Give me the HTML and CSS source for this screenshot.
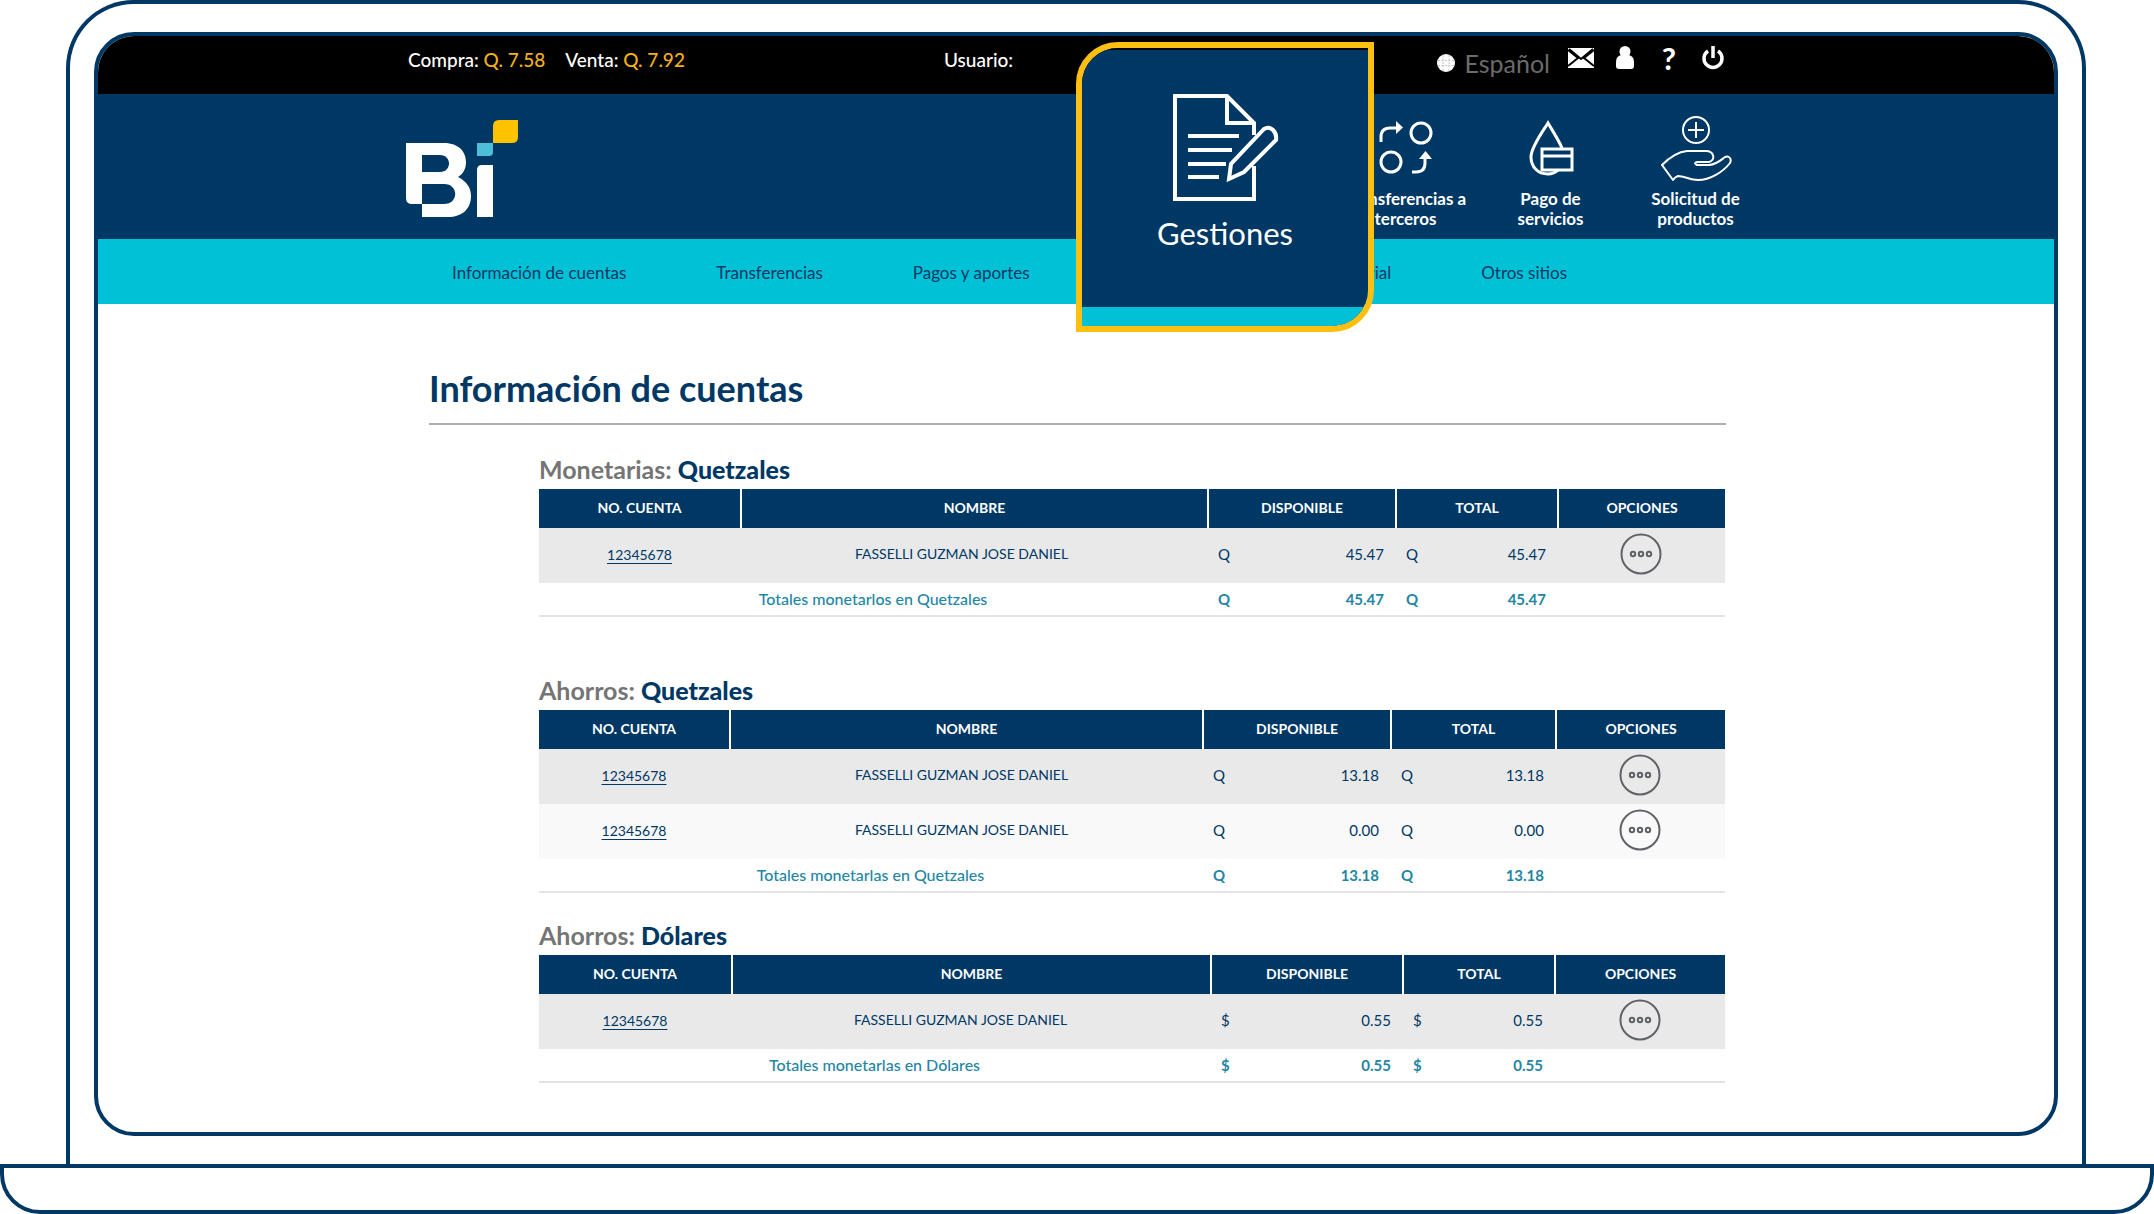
FILE: index.html
```html
<!DOCTYPE html>
<html lang="es">
<head>
<meta charset="utf-8">
<meta name="viewport" content="width=device-width, initial-scale=1">
<title>Información de cuentas</title>
<link rel="stylesheet" href="styles.css">
</head>
<body>
<svg class="sprite" aria-hidden="true">
  <symbol id="dots" viewBox="0 0 42 42">
    <g fill="none" stroke="#5f6266" stroke-width="2">
      <circle cx="21" cy="21" r="19.5"/>
      <circle cx="13" cy="21" r="2.2"/><circle cx="21" cy="21" r="2.2"/><circle cx="29" cy="21" r="2.2"/>
    </g>
  </symbol>
</svg>
<div class="laptop">
  <div class="lid">
    <div class="screen">
      <header class="site-header">
        <div class="topbar">
          <div class="container topbar-row">
            <div class="rates">
              <span>Compra: <b>Q. 7.58</b></span>
              <span>Venta: <b>Q. 7.92</b></span>
            </div>
            <div class="user">Usuario:</div>
            <div class="tools">
              <button type="button" class="language">
                <svg width="20" height="18" viewBox="0 0 20 18" aria-hidden="true"><circle cx="10" cy="9" r="9" fill="#fff"/><path d="M2 6.5h16M2 11.5h16M7 1v16M13 1v16" stroke="#c4c4c4" stroke-dasharray="2 1.5"/></svg>
                Español
              </button>
              <button type="button" class="tool" aria-label="Mensajes">
                <svg width="26" height="20" viewBox="0 0 26 20"><path fill="#fff" d="M0 0H26V20H0Z"/><path d="M0 2l10 8L0 18M26 2l-10 8 10 8M1 1l12 10L25 1" fill="none" stroke="#000" stroke-width="2"/></svg>
              </button>
              <button type="button" class="tool" aria-label="Perfil">
                <svg width="26" height="24" viewBox="0 0 26 24"><circle cx="13" cy="5.500" r="5.500" fill="#fff"/><path fill="#fff" d="M10 9C5 9.500 4 13 4 17v3q0 3 3 3h12q3 0 3-3v-3c0-4-1-7.500-6-8z"/></svg>
              </button>
              <button type="button" class="tool help" aria-label="Ayuda">?</button>
              <button type="button" class="tool" aria-label="Salir">
                <svg width="26" height="24" viewBox="0 0 26 24"><path d="M8 5a9 9 0 1 0 10 0M13 0v12" fill="none" stroke="#fff" stroke-width="3.500"/></svg>
              </button>
            </div>
          </div>
        </div>

        <div class="brandbar">
          <div class="container brand-row">
            <a href="#" class="logo" aria-label="Bi">
              <svg width="113" height="97" viewBox="0 0 113 97">
                <path fill="#fff" fill-rule="evenodd" d="M0 23H38C53 23 60 32 60 42C60 49 57 54 52 57C60 61 65 67 65 76C65 89 56 97 42 97H16V84H6Q0 84 0 78ZM16 35V52H34C46 52 46 35 34 35ZM16 64V84H38C53 84 53 64 38 64Z"/>
                <path fill="#fff" d="M71 97V50q0-5 5-5h11v52z"/>
                <path fill="#4dbfd6" d="M71 23h16v9q0 4-4 4H71z"/>
                <path fill="#fdc300" d="M87 23V6q0-6 6-6h19v17q0 6-6 6z"/>
              </svg>
            </a>
            <nav class="quick" aria-label="Accesos rápidos">
              <a href="#">
                <svg width="56" height="68" viewBox="0 0 56 68" fill="none" stroke="#fff" stroke-width="3"><circle cx="43" cy="18" r="10"/><circle cx="13" cy="47" r="10"/><path d="M3 27v-5q0-9 9-9h10M34 57h4q9 0 9-9V42"/><path fill="#fff" stroke="none" d="M18 6l7 6.500-7 6.500zM41 44l6.500-8 6.500 8z"/></svg>
                <span>Transferencias a<br>terceros</span>
              </a>
              <a href="#">
                <svg width="46" height="68" viewBox="0 0 46 68" fill="none" stroke="#fff" stroke-width="3"><path d="M34 33C30 24 24 15 20 8C15 16 3 32 3 42c0 10 7 17 17 17q6 0 10-4"/><path d="M14 34h30v21H14zM14 41h30"/></svg>
                <span>Pago de<br>servicios</span>
              </a>
              <a href="#">
                <svg width="72" height="68" viewBox="0 0 72 68" fill="none" stroke="#fff" stroke-width="2" stroke-linejoin="round"><circle cx="36" cy="15" r="13"/><path d="M36 7v16M28 15h16"/><path d="M13 65L2 50C8 44 17 37 27 36h19c8 0 10 9 3 11H37q-4 1 0 3h12C58 49 62 44 65 42c4-2 7 2 5 6C63 57 50 65 38 65c-8 0-14-4-20-4q-3 1-5 4z"/></svg>
                <span>Solicitud de<br>productos</span>
              </a>
            </nav>
          </div>
        </div>

        <nav class="menubar" aria-label="Principal">
          <div class="container menu-row">
            <div class="menu-group">
              <a href="#">Información de cuentas</a>
              <a href="#">Transferencias</a>
              <a href="#">Pagos y aportes</a>
            </div>
            <div class="menu-group">
              <a href="#">Empresarial</a>
              <a href="#">Otros sitios</a>
            </div>
          </div>
        </nav>

        <div class="callout">
          <a href="#" class="callout-link">
            <svg width="110" height="110" viewBox="0 0 110 110" fill="none" stroke="#fff" stroke-width="4"><path d="M84 73V106H5V3H57L84 30V42"/><path d="M57 3V30H84"/><path d="M18 43H69M18 57H62M18 71H56M18 84H49"/><path d="M59 86L61 71 94 36q5-3 9 1t3 10L74 79z"/></svg>
            <span>Gestiones</span>
          </a>
        </div>
      </header>

      <main class="content">
        <h1>Información de cuentas</h1>

        <section class="accounts">
          <h2>Monetarias: <b>Quetzales</b></h2>
          <table class="grid-a">
            <colgroup><col class="c1"><col class="c2"><col class="c3"><col class="c4"><col class="c5"></colgroup>
            <thead><tr><th>NO. CUENTA</th><th>NOMBRE</th><th>DISPONIBLE</th><th>TOTAL</th><th>OPCIONES</th></tr></thead>
            <tbody>
              <tr>
                <td><a href="#">12345678</a></td><td class="name">FASSELLI GUZMAN JOSE DANIEL</td>
                <td><div class="amount"><span>Q</span><span>45.47</span></div></td>
                <td><div class="amount"><span>Q</span><span>45.47</span></div></td>
                <td><button type="button" class="more" aria-label="Opciones"><svg width="42" height="42"><use href="#dots"/></svg></button></td>
              </tr>
            </tbody>
            <tfoot><tr>
              <td colspan="2" class="total-label">Totales monetarlos en Quetzales</td>
              <td><div class="amount"><span>Q</span><span>45.47</span></div></td>
              <td><div class="amount"><span>Q</span><span>45.47</span></div></td>
              <td></td>
            </tr></tfoot>
          </table>
        </section>

        <section class="accounts spaced">
          <h2>Ahorros: <b>Quetzales</b></h2>
          <table class="grid-b">
            <colgroup><col class="c1"><col class="c2"><col class="c3"><col class="c4"><col class="c5"></colgroup>
            <thead><tr><th>NO. CUENTA</th><th>NOMBRE</th><th>DISPONIBLE</th><th>TOTAL</th><th>OPCIONES</th></tr></thead>
            <tbody>
              <tr>
                <td><a href="#">12345678</a></td><td class="name">FASSELLI GUZMAN JOSE DANIEL</td>
                <td><div class="amount"><span>Q</span><span>13.18</span></div></td>
                <td><div class="amount"><span>Q</span><span>13.18</span></div></td>
                <td><button type="button" class="more" aria-label="Opciones"><svg width="42" height="42"><use href="#dots"/></svg></button></td>
              </tr>
              <tr>
                <td><a href="#">12345678</a></td><td class="name">FASSELLI GUZMAN JOSE DANIEL</td>
                <td><div class="amount"><span>Q</span><span>0.00</span></div></td>
                <td><div class="amount"><span>Q</span><span>0.00</span></div></td>
                <td><button type="button" class="more" aria-label="Opciones"><svg width="42" height="42"><use href="#dots"/></svg></button></td>
              </tr>
            </tbody>
            <tfoot><tr>
              <td colspan="2" class="total-label">Totales monetarlas en Quetzales</td>
              <td><div class="amount"><span>Q</span><span>13.18</span></div></td>
              <td><div class="amount"><span>Q</span><span>13.18</span></div></td>
              <td></td>
            </tr></tfoot>
          </table>
        </section>

        <section class="accounts">
          <h2>Ahorros: <b>Dólares</b></h2>
          <table class="grid-c">
            <colgroup><col class="c1"><col class="c2"><col class="c3"><col class="c4"><col class="c5"></colgroup>
            <thead><tr><th>NO. CUENTA</th><th>NOMBRE</th><th>DISPONIBLE</th><th>TOTAL</th><th>OPCIONES</th></tr></thead>
            <tbody>
              <tr>
                <td><a href="#">12345678</a></td><td class="name">FASSELLI GUZMAN JOSE DANIEL</td>
                <td><div class="amount"><span>$</span><span>0.55</span></div></td>
                <td><div class="amount"><span>$</span><span>0.55</span></div></td>
                <td><button type="button" class="more" aria-label="Opciones"><svg width="42" height="42"><use href="#dots"/></svg></button></td>
              </tr>
            </tbody>
            <tfoot><tr>
              <td colspan="2" class="total-label">Totales monetarlas en Dólares</td>
              <td><div class="amount"><span>$</span><span>0.55</span></div></td>
              <td><div class="amount"><span>$</span><span>0.55</span></div></td>
              <td></td>
            </tr></tfoot>
          </table>
        </section>
      </main>
    </div>
  </div>
  <div class="base"></div>
</div>
</body>
</html>
```
FILE: styles.css
```css
:root {
  --navy: #003865;
  --cyan: #00c1d5;
  --gold: #fdc010;
}

* { box-sizing: border-box; }

body {
  margin: 0;
  background: #fff;
  color: var(--navy);
  font-family: Lato, "Open Sans", sans-serif;
}

a { color: inherit; text-decoration: none; }

button {
  padding: 0;
  border: 0;
  background: none;
  color: inherit;
  font: inherit;
  cursor: pointer;
}

svg { display: block; }

.sprite { display: none; }

/* Laptop frame */
.lid {
  margin: 0 68px 0 66px;
  padding: 28px 24px;
  border: 4px solid var(--navy);
  border-bottom: 0;
  border-radius: 68px 68px 0 0;
}

.screen {
  overflow: hidden;
  border: 4px solid var(--navy);
  border-radius: 40px;
}

.base {
  height: 50px;
  border: 4px solid var(--navy);
  border-radius: 0 0 40px 40px;
}

/* Header */
.site-header { position: relative; }

.container {
  max-width: 1340px;
  margin: 0 auto;
}

.topbar {
  background: #000;
  color: #fff;
  font-size: 19px;
  font-weight: 500;
  line-height: 24px;
}

.topbar-row {
  display: grid;
  grid-template-columns: 40% 1fr auto;
  height: 58px;
  padding: 8px 20px 0 0;
}

.rates {
  display: flex;
  gap: 20px;
  padding: 4px 0 0 2px;
}

.rates b {
  color: #f5b11a;
  font-weight: 500;
}

.user { padding: 4px 0 0 10px; }

.tools {
  display: flex;
  align-items: flex-start;
  gap: 18px;
}

.tool {
  display: flex;
  align-items: center;
  justify-content: center;
  width: 26px;
  height: 28px;
}

.help {
  font-size: 31px;
  font-weight: 700;
}

.language {
  display: flex;
  align-items: center;
  gap: 8px;
  height: 38px;
  color: #6b6b6b;
  font-size: 25px;
  font-weight: 400;
}

.brandbar { background: var(--navy); }

.brand-row {
  display: flex;
  justify-content: space-between;
  height: 145px;
}

.logo { padding-top: 26px; }

.quick {
  display: grid;
  grid-template-columns: repeat(3, 145px);
  margin-right: -22px;
  padding-top: 21px;
  color: #fff;
  font-size: 17px;
  font-weight: 700;
  line-height: 20px;
  text-align: center;
}

.quick a {
  display: flex;
  flex-direction: column;
  align-items: center;
  gap: 6px;
}

.menubar { background: var(--cyan); }

.menu-row {
  display: flex;
  align-items: center;
  justify-content: space-between;
  height: 65px;
  padding: 2px 179px 0 46px;
  font-size: 17px;
}

.menu-group {
  display: flex;
  gap: 90px;
}

/* Enlarged shortcut over the header */
.callout {
  position: absolute;
  top: 6px;
  left: 50%;
  width: 298px;
  overflow: hidden;
  border: 6px solid var(--gold);
  border-radius: 42px 0 42px 0;
}

.callout-link {
  display: flex;
  flex-direction: column;
  align-items: center;
  gap: 12px;
  padding: 43px 0 56px;
  border-top: 2px solid #000;
  border-bottom: 19px solid var(--cyan);
  background: var(--navy);
  color: #fff;
  font-size: 31px;
  line-height: 36px;
}

/* Accounts */
.content {
  max-width: 1300px;
  margin: 0 auto;
  padding: 60px 0 49px 3px;
}

h1 {
  margin: 0 0 29px;
  padding-bottom: 11px;
  border-bottom: 2px solid #adadad;
  font-size: 36px;
  font-weight: 700;
  line-height: 48px;
}

.accounts { padding: 0 1px 0 110px; }

.accounts + .accounts { margin-top: 27px; }

.accounts + .spaced { margin-top: 58px; }

h2 {
  margin: 0 0 5px;
  color: #757575;
  font-size: 25px;
  font-weight: 700;
  line-height: 30px;
}

h2 b { color: var(--navy); }

table {
  width: 100%;
  border-collapse: separate;
  border-spacing: 0;
  table-layout: fixed;
  font-size: 15px;
  line-height: 20px;
}

.grid-a .c1 { width: 201px; }
.grid-a .c3 { width: 188px; }
.grid-a .c4 { width: 162px; }
.grid-a .c5 { width: 168px; }
.grid-b .c1 { width: 190px; }
.grid-b .c3 { width: 188px; }
.grid-b .c4 { width: 165px; }
.grid-b .c5 { width: 170px; }
.grid-c .c1 { width: 192px; }
.grid-c .c3 { width: 192px; }
.grid-c .c4 { width: 152px; }
.grid-c .c5 { width: 171px; }

th, td {
  padding: 0;
  text-align: center;
}

th {
  height: 39px;
  padding-bottom: 2px;
  background: var(--navy);
  color: #fff;
  font-size: 14px;
  font-weight: 700;
}

th + th { border-left: 2px solid #fff; }

tbody td {
  height: 55px;
  padding-bottom: 3px;
  background: #e9e9e9;
}

tbody tr:nth-child(even) td { background: #f9f9f9; }

tbody a {
  font-size: 14px;
  text-decoration: underline;
  text-underline-offset: 3px;
}

.name { font-size: 14px; }
.grid-a .name { padding-right: 24px; }
.grid-b .name { padding-right: 8px; }
.grid-c .name { padding-right: 20px; }

tfoot td {
  height: 34px;
  border-bottom: 2px solid #e3e3e3;
  color: #1f86a3;
  font-weight: 700;
}

tfoot .total-label {
  font-size: 16px;
  font-weight: 500;
}

.amount {
  display: flex;
  justify-content: space-between;
  padding: 0 11px;
}

.more { vertical-align: middle; }
```
